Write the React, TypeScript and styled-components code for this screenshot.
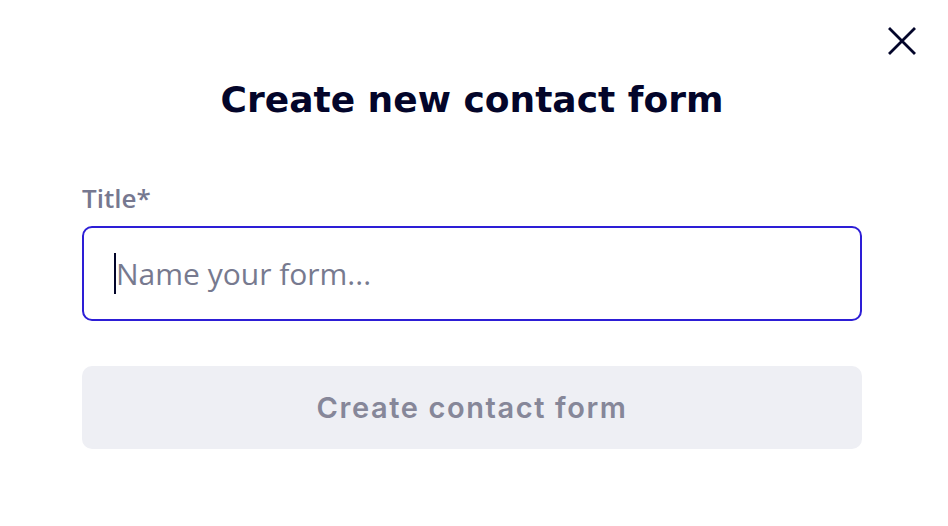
import styled, { createGlobalStyle } from 'styled-components';

const GlobalStyle = createGlobalStyle`
  html, body {
    margin: 0;
    padding: 0;
    background: #ffffff;
  }
  * {
    box-sizing: border-box;
  }
`;

const Modal = styled.div`
  position: relative;
  width: 948px;
  height: 526px;
  background: #ffffff;
  padding: 77px 0 0 82px;
`;

const CloseButton = styled.button`
  position: absolute;
  top: 25px;
  right: 30px;
  width: 32px;
  height: 32px;
  padding: 0;
  border: none;
  background: transparent;
  cursor: pointer;
  display: flex;
  align-items: center;
  justify-content: center;
`;

const Content = styled.div`
  width: 780px;
  display: flex;
  flex-direction: column;
`;

const Heading = styled.h1`
  margin: 0;
  text-align: center;
  font-family: 'DejaVu Sans', sans-serif;
  font-weight: 700;
  font-size: 36px;
  line-height: 46px;
  color: #03052a;
`;

const Label = styled.label`
  margin-top: 58px;
  font-family: 'Open Sans', sans-serif;
  font-weight: 600;
  font-size: 26px;
  line-height: 34px;
  color: #767890;
`;

const InputWrap = styled.div`
  position: relative;
  margin-top: 11px;
`;

const Input = styled.input`
  width: 100%;
  height: 95px;
  border: 2px solid #2d1ed6;
  border-radius: 10px;
  padding: 0 0 0 32px;
  font-family: 'Open Sans', sans-serif;
  font-size: 30px;
  color: #03052a;
  outline: none;
  background: #ffffff;
  &::placeholder {
    color: #777a8f;
  }
`;

const Caret = styled.span`
  position: absolute;
  left: 32px;
  top: 27px;
  width: 2px;
  height: 41px;
  background: #03052a;
`;

const SubmitButton = styled.button`
  margin-top: 45px;
  width: 100%;
  height: 83px;
  border: none;
  border-radius: 10px;
  background: #eeeff4;
  font-family: 'Inter', sans-serif;
  font-weight: 600;
  font-size: 29px;
  letter-spacing: 1.6px;
  color: #868799;
  cursor: not-allowed;
`;

export default function App() {
  return (
    <>
      <GlobalStyle />
      <Modal>
        <CloseButton aria-label="Close">
          <svg width="30" height="30" viewBox="0 0 30 30" fill="none">
            <path d="M3 3L27 27M27 3L3 27" stroke="#03052a" strokeWidth="2.8" strokeLinecap="square" />
          </svg>
        </CloseButton>
        <Content>
          <Heading>Create new contact form</Heading>
          <Label htmlFor="title">Title*</Label>
          <InputWrap>
            <Input id="title" placeholder="Name your form..." />
            <Caret />
          </InputWrap>
          <SubmitButton disabled>Create contact form</SubmitButton>
        </Content>
      </Modal>
    </>
  );
}
